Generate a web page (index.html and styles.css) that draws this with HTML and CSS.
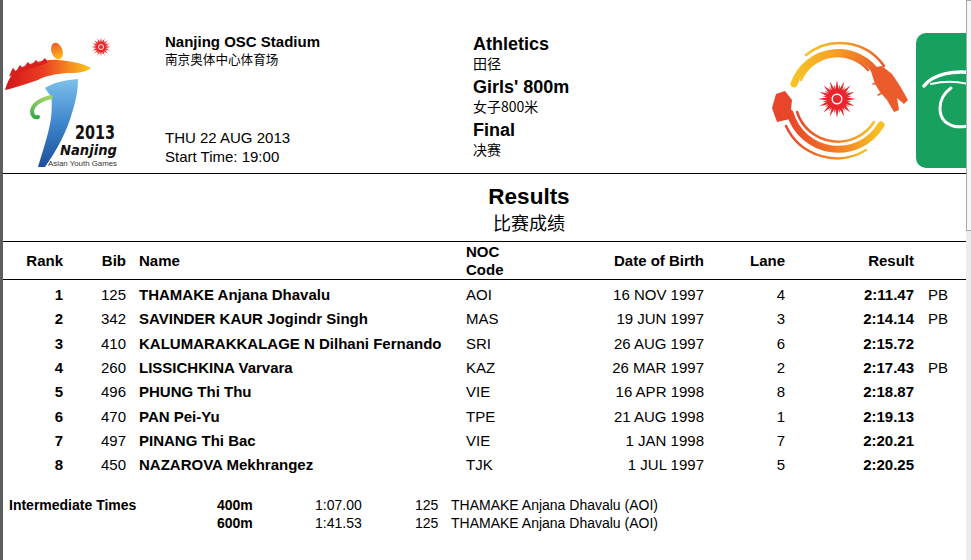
FILE: index.html
```html
<!DOCTYPE html>
<html lang="en">
<head>
<meta charset="utf-8">
<title>Results - Girls' 800m Final</title>
<link rel="stylesheet" href="styles.css">
</head>
<body>
<div class="frame">
  <div class="edge"></div>
  <div class="page">
    <header class="head">
      <svg class="logo-left" viewBox="3 0 130 173" width="130" height="173">
        <defs>
          <polygon id="star" points="19,0 8.83,1.76 17.56,7.27 7.48,5 13.43,13.43 5,7.48 7.27,17.56 1.76,8.83 0,19 -1.76,8.83 -7.27,17.56 -5,7.48 -13.43,13.43 -7.48,5 -17.56,7.27 -8.83,1.76 -19,0 -8.83,-1.76 -17.56,-7.27 -7.48,-5 -13.43,-13.43 -5,-7.48 -7.27,-17.56 -1.76,-8.83 0,-19 1.76,-8.83 7.27,-17.56 5,-7.48 13.43,-13.43 7.48,-5 17.56,-7.27 8.83,-1.76"/>
          <linearGradient id="brush" x1="0" y1="0" x2="1" y2="0">
            <stop offset="0" stop-color="#d4141c"/>
            <stop offset=".45" stop-color="#ec3f22"/>
            <stop offset=".75" stop-color="#f58a1f"/>
            <stop offset="1" stop-color="#f9c81a"/>
          </linearGradient>
          <linearGradient id="blue" x1="0" y1="0" x2="0" y2="1">
            <stop offset="0" stop-color="#7cc0ea"/>
            <stop offset=".5" stop-color="#3f86cc"/>
            <stop offset="1" stop-color="#1c4f9c"/>
          </linearGradient>
          <linearGradient id="headg" x1="0" y1="0" x2="0" y2="1">
            <stop offset="0" stop-color="#f05a28"/>
            <stop offset="1" stop-color="#f9c01b"/>
          </linearGradient>
          <linearGradient id="greeng" x1="0" y1="0" x2="0" y2="1">
            <stop offset="0" stop-color="#9fd36a"/>
            <stop offset="1" stop-color="#3aa84a"/>
          </linearGradient>
        </defs>
        <path d="M5,90 C8,80 12,73 18,69 C30,63 45,59 58,60 C70,61 82,63 91,68 C85,73 75,73 67,73 C55,74 45,76 38,80 C26,84 14,88 5,90 Z" fill="url(#brush)"/>
        <path d="M10,76 L13,69 L16,73 L20,66 L23,70 L28,63 L31,67 L36,61 L39,65 L45,59 L47,63" fill="#d8201e" stroke="#d8201e" stroke-width="1.5" stroke-linejoin="round"/>
        <ellipse cx="57" cy="51" rx="5.5" ry="8.5" transform="rotate(-20 57 51)" fill="url(#headg)"/>
        <path d="M45,88 C54,82 66,80 78,79 C78,92 75,104 72,113 C67,131 57,150 45,167 L38,167 C43,150 49,133 51,118 C52,108 52,100 51,96 C49,94 47,91 45,88 Z" fill="url(#blue)"/>
        <path d="M51,97 C41,99 33,104 32,111 C32,116 35,118 38,117" fill="none" stroke="url(#greeng)" stroke-width="4" stroke-linecap="round"/>
        <g transform="translate(101 47) scale(.5)">
          <use href="#star" fill="#e8262b"/>
          <use href="#star" fill="#e8262b" transform="rotate(11.25) scale(.78)"/>
          <circle r="9" fill="#e8262b"/>
          <circle r="5" fill="none" stroke="#fff" stroke-width="1.8"/>
        </g>
        <text x="75" y="139" class="svg-2013" textLength="40" lengthAdjust="spacingAndGlyphs">2013</text>
        <text x="60" y="155" class="svg-nanjing" textLength="57" lengthAdjust="spacingAndGlyphs">Nanjing</text>
        <text x="48" y="166" class="svg-ayg" textLength="69" lengthAdjust="spacingAndGlyphs">Asian Youth Games</text>
      </svg>
      <div class="venue">
        <div class="venue-top">
          <div class="b15">Nanjing OSC Stadium</div>
          <div class="cn13">南京奥体中心体育场</div>
        </div>
        <div class="venue-date">
          <div>THU 22 AUG 2013</div>
          <div>Start Time: 19:00</div>
        </div>
      </div>
      <div class="event">
        <div class="ev-group">
          <div class="ev-en">Athletics</div>
          <div class="ev-cn">田径</div>
        </div>
        <div class="ev-group">
          <div class="ev-en">Girls' 800m</div>
          <div class="ev-cn">女子800米</div>
        </div>
        <div class="ev-group">
          <div class="ev-en">Final</div>
          <div class="ev-cn">决赛</div>
        </div>
      </div>
      <svg class="logo-dragon" viewBox="770 0 140 173" width="140" height="173">
        <defs>
          <linearGradient id="up" x1="0" y1="0" x2="1" y2="0">
            <stop offset="0" stop-color="#f8c224"/>
            <stop offset=".55" stop-color="#f59a26"/>
            <stop offset="1" stop-color="#ec5a2a"/>
          </linearGradient>
          <linearGradient id="low" x1="0" y1="0" x2="1" y2="0">
            <stop offset="0" stop-color="#e8452a"/>
            <stop offset=".5" stop-color="#f27a26"/>
            <stop offset="1" stop-color="#f8c224"/>
          </linearGradient>
        </defs>
        <path d="M794,84 A47,47 0 0 1 879,76" fill="none" stroke="url(#up)" stroke-width="7" stroke-linecap="round"/>
        <path d="M801,80 A40,40 0 0 1 868,70" fill="none" stroke="url(#up)" stroke-width="2.5" stroke-linecap="round"/>
        <path d="M806,55 A54,54 0 0 1 884,66" fill="none" stroke="url(#up)" stroke-width="2.5" stroke-linecap="round"/>
        <path d="M790,113 A50,50 0 0 0 881,125" fill="none" stroke="url(#low)" stroke-width="7" stroke-linecap="round"/>
        <path d="M797,112 A43,43 0 0 0 874,122" fill="none" stroke="url(#low)" stroke-width="2.5" stroke-linecap="round"/>
        <path d="M786,126 A56,56 0 0 0 866,150" fill="none" stroke="url(#low)" stroke-width="2.5" stroke-linecap="round"/>
        <path d="M870,68 L882,66 L892,74 L900,86 L908,100 L904,104 L897,98 L899,110 L894,112 L887,100 L880,92 L875,84 Z" fill="#ec5b2b"/>
        <path d="M886,80 L873,84 M890,89 L878,95" stroke="#ec5b2b" stroke-width="1.5" fill="none" stroke-linecap="round"/>
        <path d="M792,100 L785,91 L776,94 L772,108 L777,122 L790,119 Z" fill="#e8452a"/>
        <g transform="translate(837 99)">
          <use href="#star" fill="#e8262b"/>
          <use href="#star" fill="#e8262b" transform="rotate(11.25) scale(.78)"/>
          <circle r="8.5" fill="#e8262b"/>
          <circle r="4.8" fill="none" stroke="#fff" stroke-width="1.4"/>
        </g>
      </svg>
      <svg class="logo-green" viewBox="913 0 60 173" width="60" height="173">
        <rect x="913" y="33" width="70" height="135" rx="10" fill="#18a05e"/>
        <path d="M921,86 C930,74 950,70 972,73" fill="none" stroke="#fff" stroke-width="3.5" stroke-linecap="round"/>
        <path d="M928,84 C945,80 960,82 972,86" fill="none" stroke="#fff" stroke-width="2" stroke-linecap="round"/>
        <path d="M948,88 C934,98 932,120 950,126 C958,128 966,126 972,124" fill="none" stroke="#fff" stroke-width="3" stroke-linecap="round"/>
      </svg>
    </header>

    <section class="title">
      <div class="title-inner">
        <div class="t-en">Results</div>
        <div class="t-cn">比赛成绩</div>
      </div>
    </section>

    <div class="grid thead">
      <div class="r">Rank</div>
      <div class="r">Bib</div>
      <div class="name">Name</div>
      <div>NOC<br>Code</div>
      <div class="r">Date of Birth</div>
      <div class="r">Lane</div>
      <div class="r">Result</div>
      <div class="pb"></div>
    </div>

    <div class="tbody">
      <div class="grid row"><div class="r b">1</div><div class="r">125</div><div class="name b">THAMAKE Anjana Dhavalu</div><div>AOI</div><div class="r">16 NOV 1997</div><div class="r">4</div><div class="r b">2:11.47</div><div class="pb">PB</div></div>
      <div class="grid row"><div class="r b">2</div><div class="r">342</div><div class="name b">SAVINDER KAUR Jogindr Singh</div><div>MAS</div><div class="r">19 JUN 1997</div><div class="r">3</div><div class="r b">2:14.14</div><div class="pb">PB</div></div>
      <div class="grid row"><div class="r b">3</div><div class="r">410</div><div class="name b">KALUMARAKKALAGE N Dilhani Fernando</div><div>SRI</div><div class="r">26 AUG 1997</div><div class="r">6</div><div class="r b">2:15.72</div><div class="pb"></div></div>
      <div class="grid row"><div class="r b">4</div><div class="r">260</div><div class="name b">LISSICHKINA Varvara</div><div>KAZ</div><div class="r">26 MAR 1997</div><div class="r">2</div><div class="r b">2:17.43</div><div class="pb">PB</div></div>
      <div class="grid row"><div class="r b">5</div><div class="r">496</div><div class="name b">PHUNG Thi Thu</div><div>VIE</div><div class="r">16 APR 1998</div><div class="r">8</div><div class="r b">2:18.87</div><div class="pb"></div></div>
      <div class="grid row"><div class="r b">6</div><div class="r">470</div><div class="name b">PAN Pei-Yu</div><div>TPE</div><div class="r">21 AUG 1998</div><div class="r">1</div><div class="r b">2:19.13</div><div class="pb"></div></div>
      <div class="grid row"><div class="r b">7</div><div class="r">497</div><div class="name b">PINANG Thi Bac</div><div>VIE</div><div class="r">1 JAN 1998</div><div class="r">7</div><div class="r b">2:20.21</div><div class="pb"></div></div>
      <div class="grid row"><div class="r b">8</div><div class="r">450</div><div class="name b">NAZAROVA Mekhrangez</div><div>TJK</div><div class="r">1 JUL 1997</div><div class="r">5</div><div class="r b">2:20.25</div><div class="pb"></div></div>
    </div>

    <div class="inter">
      <div class="i-label b">Intermediate Times</div>
      <div class="b">400m</div>
      <div>1:07.00</div>
      <div class="r">125</div>
      <div class="i-name">THAMAKE Anjana Dhavalu (AOI)</div>
      <div></div>
      <div class="b">600m</div>
      <div>1:41.53</div>
      <div class="r">125</div>
      <div class="i-name">THAMAKE Anjana Dhavalu (AOI)</div>
    </div>
  </div>
  <div class="scroll"><div class="thumb"></div></div>
</div>
</body>
</html>
```

FILE: styles.css
```css
html, body {
  margin: 0;
  padding: 0;
  background: #fff;
}
body {
  font-family: "Liberation Sans", Arial, "Noto Sans CJK SC", sans-serif;
  color: #000;
  font-size: 15px;
}
.frame {
  display: flex;
  width: 971px;
  height: 560px;
  overflow: hidden;
}
.edge {
  flex: none;
  width: 3px;
  background: #5e5e5e;
}
.page {
  flex: none;
  width: 963px;
  overflow: hidden;
}
.scroll {
  flex: none;
  width: 5px;
  background: #ececec;
}
.thumb {
  height: 231px;
  box-sizing: border-box;
  border: 1px solid #a9a9a9;
  border-right: 0;
  background: #f7f7f7;
}

/* header */
.head {
  display: flex;
  height: 173px;
  border-bottom: 1px solid #000;
}
.logo-left, .logo-dragon, .logo-green {
  flex: none;
  display: block;
}
.svg-2013 {
  font-family: "DejaVu Sans", sans-serif;
  font-weight: bold;
  font-size: 20px;
  fill: #111;
}
.svg-nanjing {
  font-family: "DejaVu Sans", sans-serif;
  font-weight: bold;
  font-style: italic;
  font-size: 14px;
  fill: #111;
}
.svg-ayg {
  font-family: "Liberation Sans", sans-serif;
  font-size: 7.3px;
  fill: #333;
}
.venue {
  flex: none;
  width: 308px;
  margin-left: 32px;
  padding-top: 34px;
  display: flex;
  flex-direction: column;
}
.b15 {
  font-weight: bold;
  font-size: 15px;
  line-height: 16px;
}
.cn13 {
  font-family: "Noto Sans CJK SC", sans-serif;
  font-size: 12.6px;
  line-height: 18px;
}
.venue-date {
  margin-top: 60px;
  font-size: 15px;
  line-height: 19px;
}
.event {
  flex: none;
  width: 297px;
  padding-top: 34px;
}
.ev-group + .ev-group {
  margin-top: 4px;
}
.ev-en {
  font-weight: bold;
  font-size: 18px;
  line-height: 20px;
}
.ev-cn {
  font-family: "Noto Sans CJK SC", sans-serif;
  font-size: 14px;
  line-height: 19px;
}
.logo-green {
  margin-left: 6px;
}

/* title */
.title {
  padding: 11px 0 6px;
  border-bottom: 1px solid #000;
}
.title-inner {
  width: 1052px;
  text-align: center;
}
.t-en {
  font-weight: bold;
  font-size: 22.5px;
  line-height: 24px;
}
.t-cn {
  font-family: "Noto Sans CJK SC", sans-serif;
  font-size: 18px;
  line-height: 26px;
}

/* table */
.grid {
  display: grid;
  grid-template-columns: 60px 63px 340px 97px 141px 81px 129px 1fr;
  align-items: center;
  font-size: 15px;
  line-height: 18px;
  white-space: nowrap;
}
.thead {
  height: 37px;
  border-bottom: 1px solid #000;
  font-weight: bold;
}
.tbody {
  padding-top: 3px;
}
.row {
  height: 24.3px;
}
.r {
  text-align: right;
}
.b {
  font-weight: bold;
}
.name {
  padding-left: 13px;
}
.pb {
  padding-left: 14px;
}

/* intermediate */
.inter {
  display: grid;
  grid-template-columns: 214px 98px 100px 23px 1fr;
  padding-top: 19px;
  font-size: 14px;
  line-height: 18px;
  white-space: nowrap;
}
.i-label {
  padding-left: 6px;
  font-size: 14px;
}
.i-name {
  padding-left: 13px;
}
```
